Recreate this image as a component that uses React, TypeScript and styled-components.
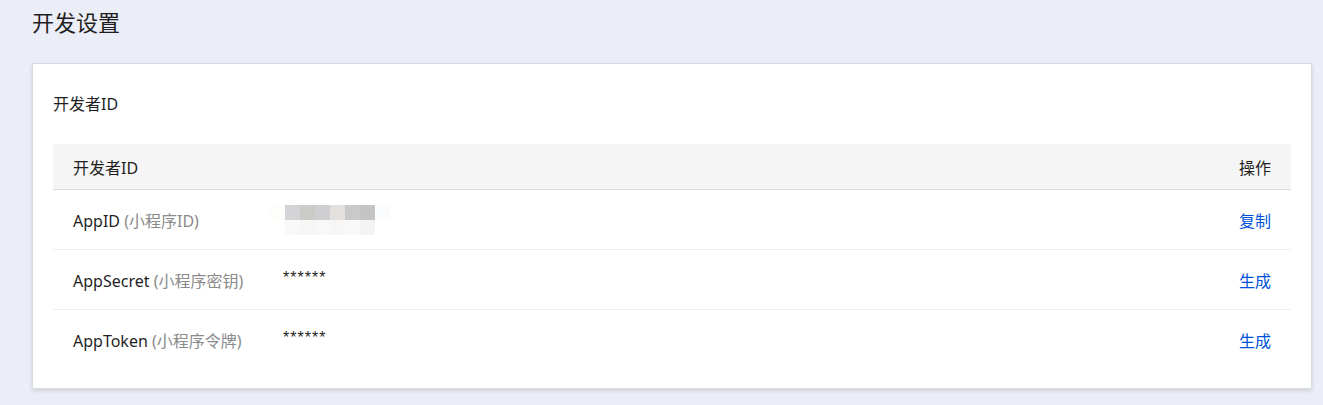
import React from "react";
import styled, { createGlobalStyle } from "styled-components";

const Global = createGlobalStyle`
  html, body { margin: 0; padding: 0; background: #ebeef6; }
  body { font-family: "Noto Sans", "Noto Sans CJK SC", sans-serif; color: #1f1f1f; }
`;

const Page = styled.div`
  padding: 0 11px 16px 32px;
  min-height: 405px;
  box-sizing: border-box;
  background: #ebeef6;
`;

const Title = styled.h1`
  margin: 0;
  height: 44px;
  line-height: 44px;
  font-size: 22px;
  font-weight: 400;
  color: #1f1f1f;
`;

const Card = styled.section`
  margin-top: 19px;
  background: #fff;
  border: 1px solid #d9dbe0;
  box-shadow: 0 2px 4px rgba(0, 0, 0, 0.12);
  padding: 20px 20px 18px;
`;

const CardTitle = styled.div`
  height: 40px;
  line-height: 40px;
  font-size: 16px;
  margin-bottom: 20px;
`;

const Row = styled.div<{ $head?: boolean; $last?: boolean }>`
  display: grid;
  grid-template-columns: 210px 1fr auto;
  align-items: center;
  padding: 0 20px;
  box-sizing: border-box;
  height: ${(p) => (p.$head ? "46px" : "60px")};
  background: ${(p) => (p.$head ? "#f5f5f5" : "#fff")};
  border-bottom: 1px solid ${(p) => (p.$head ? "#dedede" : p.$last ? "transparent" : "#efefef")};
  font-size: 16px;
`;

const Name = styled.span`
  color: #1f1f1f;
`;

const Hint = styled.span`
  color: #8a8a8a;
`;

const Masked = styled.span`
  font-family: "Liberation Sans", sans-serif;
  font-size: 16px;
  letter-spacing: 1px;
  margin-top: -4px;
`;

const Action = styled.a`
  color: #0052d9;
  text-decoration: none;
  cursor: pointer;
  justify-self: end;
`;

const Head = styled.span<{ $end?: boolean }>`
  justify-self: ${(p) => (p.$end ? "end" : "start")};
`;

const Mosaic = styled.div`
  display: grid;
  grid-template-columns: repeat(8, 15px);
  grid-auto-rows: 15px;
  margin-left: -13px;
`;

const Pixel = styled.div``;

const mosaic = [
  "#fdfdf9", "#d4d3d6", "#cbcbc8", "#cfcfd2", "#e3e0dd", "#c8c9c8", "#c4c4c4", "#fbfcfe",
  "#ffffff", "#f9f9f9", "#f6f6f6", "#f8f8f8", "#f6f6f6", "#f9f9f9", "#f4f4f4", "#ffffff",
];

export default function App() {
  return (
    <>
      <Global />
      <Page>
        <Title>开发设置</Title>
        <Card>
          <CardTitle>开发者ID</CardTitle>
          <Row $head>
            <Head>开发者ID</Head>
            <span />
            <Head $end>操作</Head>
          </Row>
          <Row>
            <span>
              <Name>AppID</Name> <Hint>(小程序ID)</Hint>
            </span>
            <Mosaic>
              {mosaic.map((c, i) => (
                <Pixel key={i} style={{ background: c }} />
              ))}
            </Mosaic>
            <Action>复制</Action>
          </Row>
          <Row>
            <span>
              <Name>AppSecret</Name> <Hint>(小程序密钥)</Hint>
            </span>
            <Masked>******</Masked>
            <Action>生成</Action>
          </Row>
          <Row $last>
            <span>
              <Name>AppToken</Name> <Hint>(小程序令牌)</Hint>
            </span>
            <Masked>******</Masked>
            <Action>生成</Action>
          </Row>
        </Card>
      </Page>
    </>
  );
}
